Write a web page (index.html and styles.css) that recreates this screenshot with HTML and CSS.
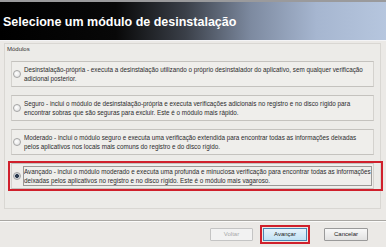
FILE: index.html
```html
<!DOCTYPE html>
<html lang="pt">
<head>
<meta charset="utf-8">
<title>Selecione um módulo de desinstalação</title>
<link rel="stylesheet" href="styles.css">
</head>
<body>
<div class="window">
  <header class="banner">
    <h1 class="title">Selecione um módulo de desinstalação</h1>
  </header>
  <main class="content">
    <section class="group">
      <div class="group-label">Módulos</div>
      <div class="options">
        <label class="option">
          <span class="radio"></span>
          <span class="text">Desinstalação-própria - executa a desinstalação utilizando o próprio desinstalador do aplicativo, sem qualquer verificação<br>adicional posterior.</span>
        </label>
        <label class="option">
          <span class="radio"></span>
          <span class="text">Seguro - inclui o módulo de desinstalação-própria e executa verificações adicionais no registro e no disco rígido para<br>encontrar sobras que são seguras para excluir. Este é o módulo mais rápido.</span>
        </label>
        <label class="option">
          <span class="radio"></span>
          <span class="text">Moderado - inclui o módulo seguro e executa uma verificação extendida para encontrar todas as informações deixadas<br>pelos aplicativos nos locais mais comuns do registro e do disco rígido.</span>
        </label>
        <label class="option option-selected">
          <span class="radio radio-checked"></span>
          <span class="text text-focus">Avançado - inclui o módulo moderado e executa uma profunda e minuciosa verificação para encontrar todas as informações<br>deixadas pelos aplicativos no registro e no disco rígido. Este é o módulo mais vagaroso.</span>
        </label>
      </div>
    </section>
  </main>
  <footer class="footer">
    <button class="btn btn-disabled">Voltar</button>
    <button class="btn btn-primary">Avançar</button>
    <button class="btn btn-cancel">Cancelar</button>
  </footer>
</div>
</body>
</html>
```

FILE: styles.css
```css
html, body {
  margin: 0;
  padding: 0;
}
body {
  width: 386px;
  height: 247px;
  overflow: hidden;
  background: #ebe9e6;
  font-family: "Liberation Sans", Arial, sans-serif;
}
.window {
  display: flex;
  flex-direction: column;
  width: 386px;
  height: 247px;
}
.banner {
  height: 38px;
  border-top: 2px solid #9a9a9c;
  border-bottom: 1px solid #f4f4f6;
  background: linear-gradient(90deg, #000 0%, #080808 30%, #3a3f48 48%, #7d8aa0 65%, #a6b6d0 82%, #b6c6de 100%);
  display: flex;
  align-items: center;
}
.title {
  margin: 1px 0 0 3px;
  color: #fff;
  font-size: 12.5px;
  font-weight: bold;
  letter-spacing: 0;
}
.content {
  padding: 2px 5px 0 4px;
}
.group {
  height: 166px;
  border: 1px solid #d9d7d3;
  background: #ecebe8;
  box-sizing: border-box;
  padding: 2px 0 0 2px;
}
.group-label {
  font-size: 6px;
  color: #333;
  height: 12px;
}
.options {
  display: flex;
  flex-direction: column;
  gap: 8px;
  padding: 3px 0 0 4px;
  width: 363px;
}
.option {
  position: relative;
  height: 26px;
  box-sizing: border-box;
  border-top: 1px solid #c4c2be;
  border-bottom: 1px solid #c4c2be;
  border-left: 1px solid #d4d2ce;
  border-right: 1px solid #d4d2ce;
  background: #efeeeb;
  display: flex;
  align-items: center;
  gap: 3px;
  padding-left: 1px;
}
.option-selected::after {
  content: "";
  position: absolute;
  left: -4px;
  right: -10px;
  top: -3px;
  bottom: -3px;
  border: 2px solid #d0202c;
}
.radio {
  width: 6px;
  height: 6px;
  border-radius: 50%;
  border: 1px solid #a4a4a4;
  background: radial-gradient(circle at 40% 40%, #fff, #dcdcdc);
  flex: none;
}
.radio-checked {
  background: radial-gradient(circle, #2c3c50 0 1.6px, #c8ccd2 2.2px, #f2f2f2 100%);
}
.text {
  font-size: 6.3px;
  line-height: 9px;
  color: #2b2b2b;
  white-space: nowrap;
}
.text-focus {
  outline: 1px solid #9a9896;
  outline-offset: 0;
}
.footer {
  margin-top: auto;
  height: 26px;
  border-top: 1px solid #a9a7a3;
  box-shadow: inset 0 1px 0 #fbfbfa;
  display: flex;
  justify-content: flex-end;
  align-items: center;
  padding-right: 18px;
}
.btn {
  font-family: "Liberation Sans", Arial, sans-serif;
  font-size: 6px;
  height: 13px;
  padding: 0;
  border: 1px solid #9a9a9a;
  border-radius: 1px;
  background: linear-gradient(#f8f8f8, #e2e2e2);
  color: #222;
}
.btn-disabled {
  width: 43px;
  color: #a8a8a8;
  border-color: #c4c4c4;
  background: #f2f2f2;
}
.btn-primary {
  width: 44px;
  margin-left: 10px;
  border-color: #4a86b4;
  background: linear-gradient(#e6f3fb, #c2e2f5);
  outline: 2px solid #d0202c;
  outline-offset: 1px;
  border-radius: 0;
}
.btn-cancel {
  width: 44px;
  margin-left: 17px;
}
```
